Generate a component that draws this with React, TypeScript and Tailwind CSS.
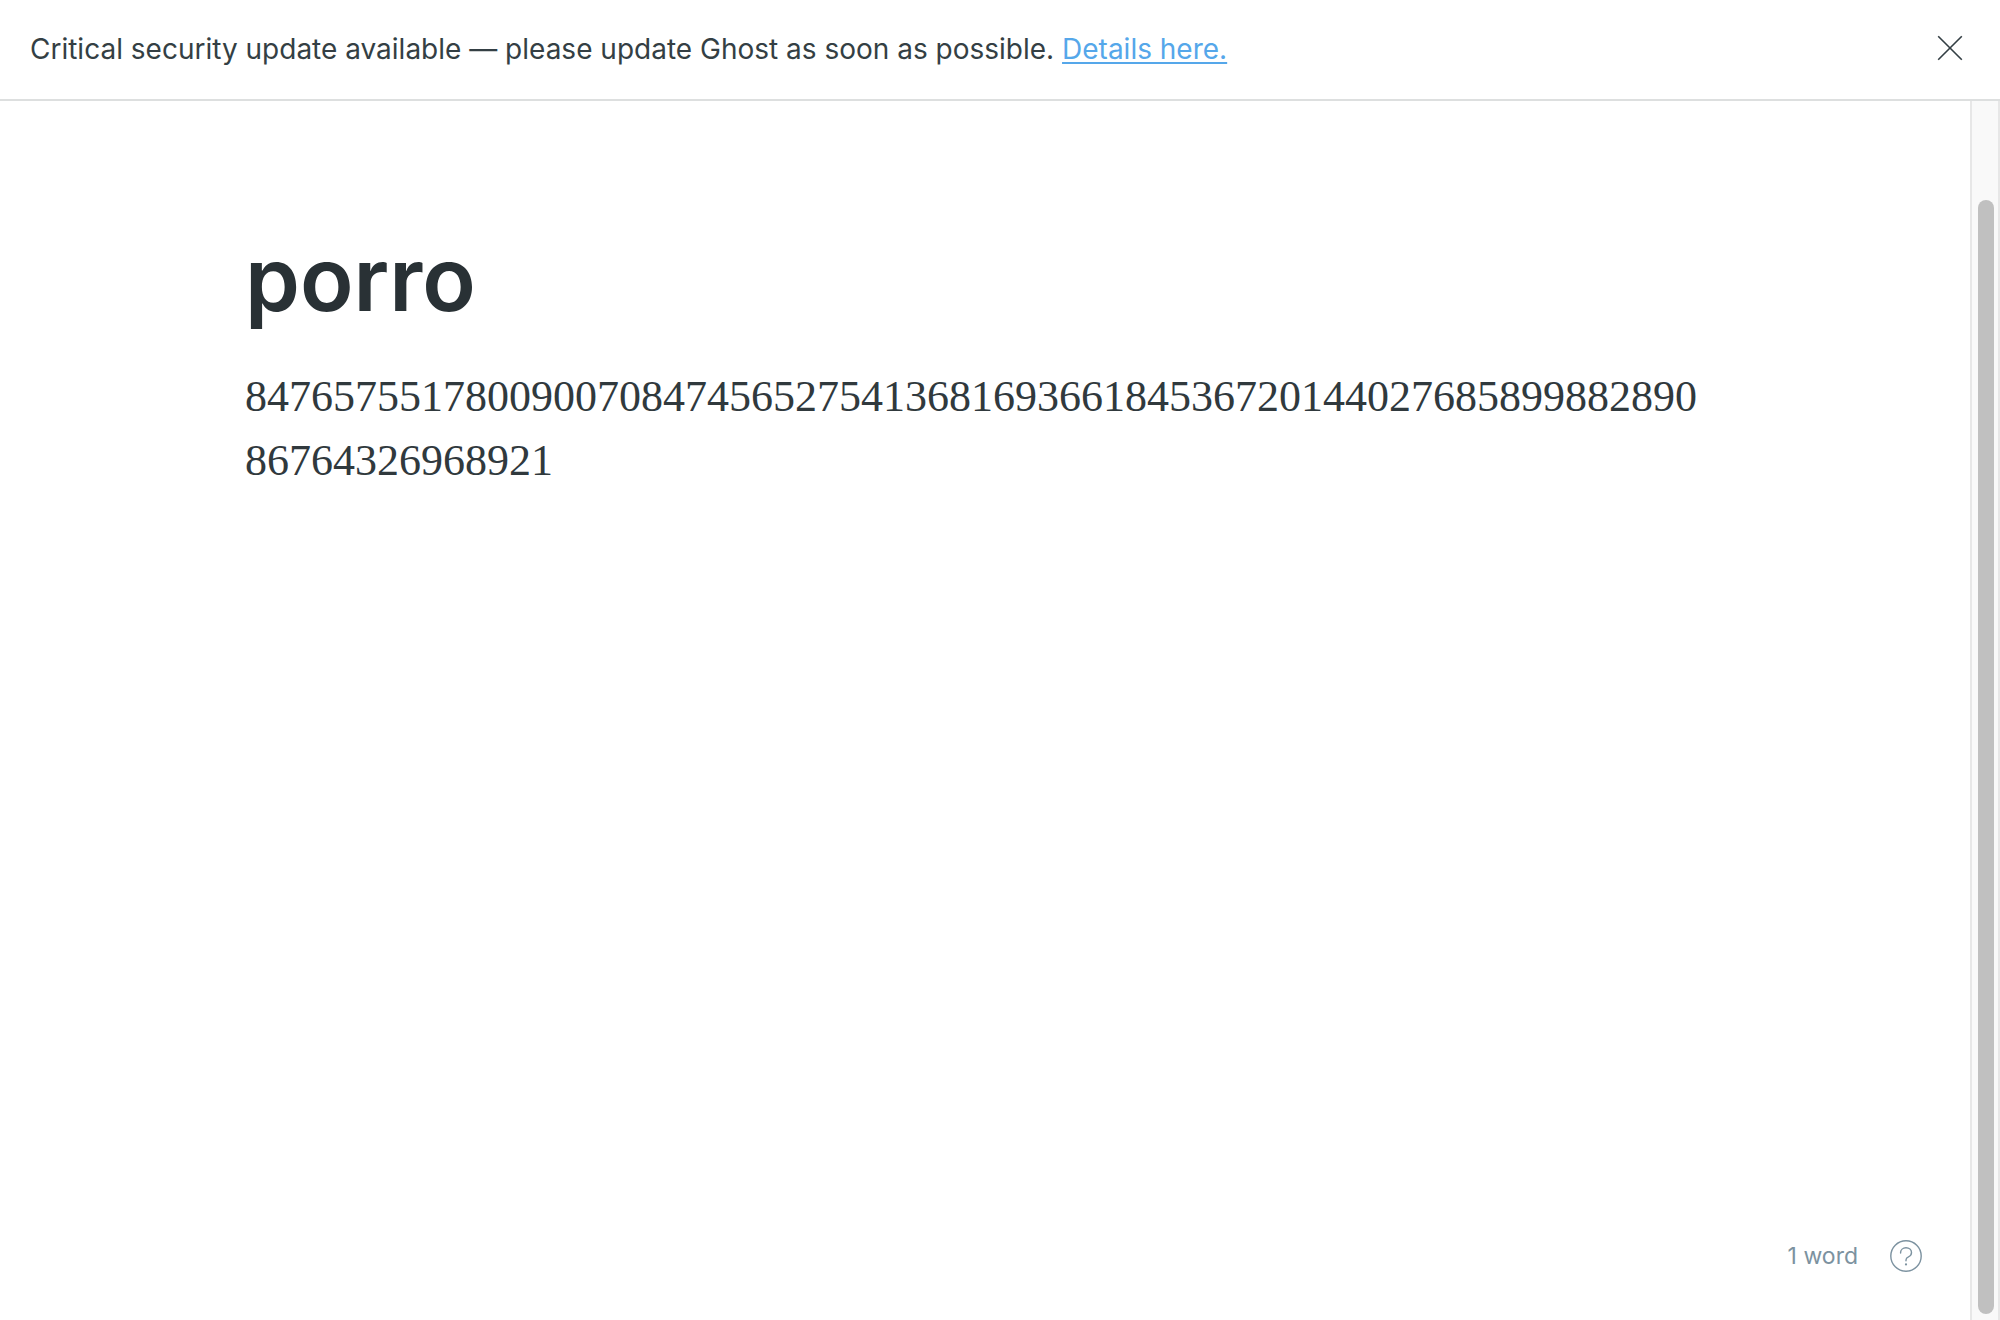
import { useState } from "react";

const FIRST_LINE = "847657551780090070847456527541368169366184536720144027685899882890";
const SECOND_LINE = "86764326968921";

function UpdateBanner({ onClose }: { onClose: () => void }) {
  return (
    <aside className="flex shrink-0 items-center justify-between border-b-2 border-[#dddfdf] pt-[27px] pr-[37px] pb-7 pl-[30px]">
      <p className="text-[28px] leading-11 text-[#343f44]">
        Critical security update available — please update Ghost as soon as possible.{" "}
        <a href="#details" className="text-[#55a7ea] underline decoration-2 underline-offset-3">
          Details here.
        </a>
      </p>
      <button type="button" aria-label="Close" onClick={onClose} className="mb-0.5 cursor-pointer text-[#343f44]">
        <svg viewBox="0 0 26 26" className="size-[26px]" fill="none" stroke="currentColor" strokeWidth="1.6">
          <path d="M1.2 1.2 24.8 24.8M24.8 1.2 1.2 24.8" />
        </svg>
      </button>
    </aside>
  );
}

function StatusBar() {
  return (
    <footer className="flex items-center justify-end gap-8 pr-12 pb-12 text-[#7c92a0]">
      <span className="text-[23px] leading-8">1 word</span>
      <button type="button" aria-label="Help" className="cursor-pointer">
        <svg viewBox="0 0 32 32" className="size-8" fill="none" stroke="currentColor" strokeWidth="1.4" strokeLinecap="round">
          <circle cx="16" cy="16" r="15.2" />
          <path d="M10.600 13v-.500c0-2.600 2.300-4.700 5.400-4.700s5.500 2 5.500 4.800c0 2.400-1.400 3.600-3 4.200-1.700.7-2.500 1.400-2.500 3.200v.8" />
          <circle cx="16" cy="24.400" r="1.100" fill="currentColor" stroke="none" />
        </svg>
      </button>
    </footer>
  );
}

export default function App() {
  const [showBanner, setShowBanner] = useState(true);
  const [title, setTitle] = useState("porro");

  return (
    <div className="flex h-screen flex-col bg-white font-['Inter',sans-serif]">
      {showBanner && <UpdateBanner onClose={() => setShowBanner(false)} />}
      <div className="flex min-h-0 flex-1">
        <main className="flex min-w-0 flex-1 flex-col justify-between">
          <article className="mx-auto w-full max-w-[1480px] pt-30">
            <input
              aria-label="Post title"
              value={title}
              onChange={(event) => setTitle(event.target.value)}
              className="block h-[116px] w-full text-[88px] font-semibold text-[#293135] outline-none"
            />
            <p className="mt-7 font-['Liberation_Serif',serif] text-[44px] leading-16 text-[#30393d]">
              {FIRST_LINE}
              <wbr />
              {SECOND_LINE}
            </p>
          </article>
          <StatusBar />
        </main>
        <div className="flex w-[30px] shrink-0 justify-end border-x-2 border-[#e7e7e7] bg-[#f9f9f9] pt-[99px] pr-1 pb-1.5">
          <div className="w-4 rounded-full bg-[#c0c0c0]" />
        </div>
      </div>
    </div>
  );
}
